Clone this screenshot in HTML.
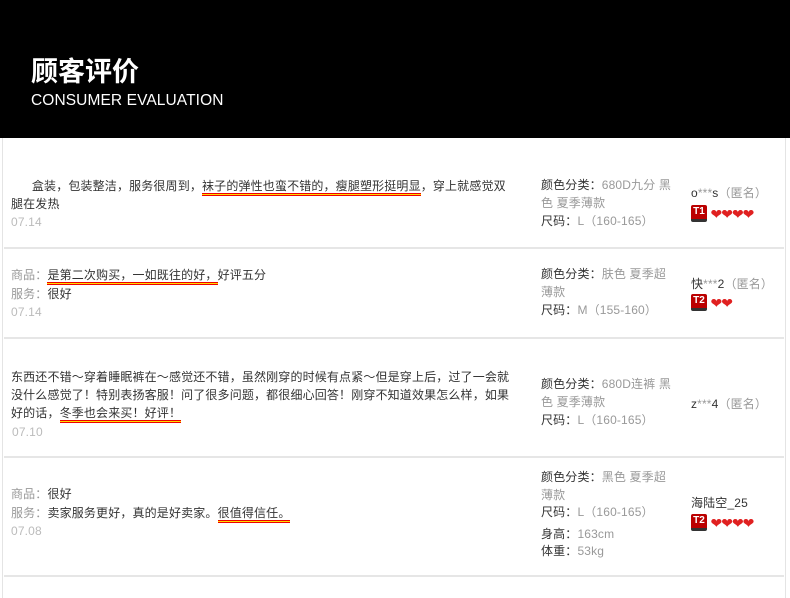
<!DOCTYPE html>
<html><head><meta charset="utf-8"><style>
*{margin:0;padding:0;box-sizing:border-box}
body{width:790px;height:598px;background:#fff;position:relative;overflow:hidden;font-family:"Liberation Sans","Noto Sans CJK SC","WenQuanYi Zen Hei",sans-serif;font-size:12px;color:#333}
.hd{position:absolute;left:0;top:0;width:790px;height:138px;background:#000}
.t1{position:absolute;left:31px;top:56px;color:#fff;font-size:27px;font-weight:bold;line-height:32px}
.t2{position:absolute;left:31px;top:92px;color:#fff;font-size:15.5px;letter-spacing:0.1px;line-height:18px}
.lb{position:absolute;left:2px;top:138px;width:1px;height:460px;background:#e4e4e4}
.rb{position:absolute;left:785px;top:138px;width:1px;height:460px;background:#e4e4e4}
.sep{position:absolute;left:4px;width:780px;height:2px;background:#e6e6e6}
.a{position:absolute;line-height:18px;white-space:nowrap;letter-spacing:0.15px}
.g{color:#999}.d{color:#bbb}
.u{background:linear-gradient(#e00,#e00) 0 100%/100% 1px no-repeat,linear-gradient(#fd0,#fd0) 0 calc(100% - 1px)/100% 1px no-repeat,linear-gradient(#e00,#e00) 0 calc(100% - 2px)/100% 1px no-repeat;padding-bottom:3px}
.bd{display:inline-block;width:16px;height:17px;background:#b00;border-radius:2px;color:#fff;font-size:10px;font-weight:bold;text-align:center;line-height:13px;vertical-align:middle;border-bottom:3px solid #333;letter-spacing:0}
.h{color:#e02020;font-size:14px;letter-spacing:-1px;vertical-align:middle}
</style></head><body>
<div class="hd"><div class="t1">顾客评价</div><div class="t2">CONSUMER EVALUATION</div></div>
<div class="lb"></div><div class="rb"></div>

<div class="a" style="left:11px;top:177px">&nbsp;&nbsp;&nbsp;&nbsp;&nbsp;&nbsp;盒装，包装整洁，服务很周到，<span class="u">袜子的弹性也蛮不错的，瘦腿塑形挺明显</span>，穿上就感觉双</div>
<div class="a" style="left:11px;top:195px">腿在发热</div>
<div class="a d" style="left:11px;top:213px">07.14</div>
<div class="a" style="left:541px;top:176px">颜色分类：<span class="g">680D九分 黑</span></div>
<div class="a g" style="left:541px;top:194px">色 夏季薄款</div>
<div class="a" style="left:541px;top:212px">尺码：<span class="g">L（160-165）</span></div>
<div class="a" style="left:691px;top:184px">o<span class="g">***</span>s<span class="g">（匿名）</span></div>
<div class="a" style="left:691px;top:204px"><span class="bd">T1</span> <span class="h">❤❤❤❤</span></div>
<div class="sep" style="top:247px"></div>

<div class="a" style="left:11px;top:266px"><span class="g">商品：</span><span class="u">是第二次购买，一如既往的好，</span>好评五分</div>
<div class="a" style="left:11px;top:285px"><span class="g">服务：</span>很好</div>
<div class="a d" style="left:11px;top:303px">07.14</div>
<div class="a" style="left:541px;top:265px">颜色分类：<span class="g">肤色 夏季超</span></div>
<div class="a g" style="left:541px;top:283px">薄款</div>
<div class="a" style="left:541px;top:301px">尺码：<span class="g">M（155-160）</span></div>
<div class="a" style="left:691px;top:275px">快<span class="g">***</span>2<span class="g">（匿名）</span></div>
<div class="a" style="left:691px;top:293px"><span class="bd">T2</span> <span class="h">❤❤</span></div>
<div class="sep" style="top:337px"></div>

<div class="a" style="left:11px;top:368px">东西还不错～穿着睡眠裤在～感觉还不错，虽然刚穿的时候有点紧～但是穿上后，过了一会就</div>
<div class="a" style="left:11px;top:386px">没什么感觉了！特别表扬客服！问了很多问题，都很细心回答！刚穿不知道效果怎么样，如果</div>
<div class="a" style="left:11px;top:404px">好的话，<span class="u">冬季也会来买！好评！</span></div>
<div class="a d" style="left:12px;top:423px">07.10</div>
<div class="a" style="left:541px;top:375px">颜色分类：<span class="g">680D连裤 黑</span></div>
<div class="a g" style="left:541px;top:393px">色 夏季薄款</div>
<div class="a" style="left:541px;top:411px">尺码：<span class="g">L（160-165）</span></div>
<div class="a" style="left:691px;top:395px">z<span class="g">***</span>4<span class="g">（匿名）</span></div>
<div class="sep" style="top:456px"></div>

<div class="a" style="left:11px;top:485px"><span class="g">商品：</span>很好</div>
<div class="a" style="left:11px;top:504px"><span class="g">服务：</span>卖家服务更好，真的是好卖家。<span class="u">很值得信任。</span></div>
<div class="a d" style="left:11px;top:522px">07.08</div>
<div class="a" style="left:541px;top:468px">颜色分类：<span class="g">黑色 夏季超</span></div>
<div class="a g" style="left:541px;top:486px">薄款</div>
<div class="a" style="left:541px;top:503px">尺码：<span class="g">L（160-165）</span></div>
<div class="a" style="left:541px;top:525px">身高：<span class="g">163cm</span></div>
<div class="a" style="left:541px;top:542px">体重：<span class="g">53kg</span></div>
<div class="a" style="left:691px;top:494px">海陆空_25</div>
<div class="a" style="left:691px;top:513px"><span class="bd">T2</span> <span class="h">❤❤❤❤</span></div>
<div class="sep" style="top:575px"></div>
</body></html>
